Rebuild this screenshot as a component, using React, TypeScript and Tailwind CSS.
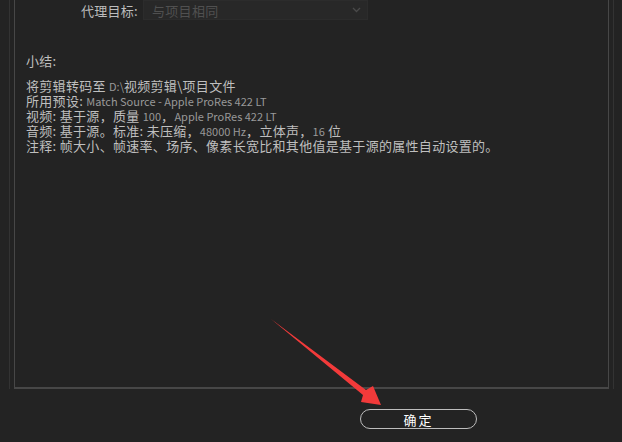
export default function App() {
  const lines = [
    [['将剪辑转码至 ', 'zh'], ['D:\\', 'en'], ['视频剪辑\\项目文件', 'zh']],
    [['所用预设: ', 'zh'], ['Match Source - Apple ProRes 422 LT', 'en']],
    [['视频: 基于源，质量 ', 'zh'], ['100', 'en'], ['，', 'zh'], ['Apple ProRes 422 LT', 'en']],
    [['音频: 基于源。标准: 未压缩，', 'zh'], ['48000 Hz', 'en'], ['，立体声，', 'zh'], ['16', 'en'], [' 位', 'zh']],
    [['注释: 帧大小、帧速率、场序、像素长宽比和其他值是基于源的属性自动设置的。', 'zh']],
  ]

  return (
    <div
      className="relative w-[622px] h-[442px] overflow-hidden bg-[#232323] text-[#bfbfbf]"
      style={{ fontFamily: '"Noto Sans CJK SC", "Noto Sans", sans-serif' }}
    >
      {/* Outer frame */}
      <div className="ml-[9px] w-[605px] h-[389px] border-x border-[#333] px-[4px]">
        {/* Inner panel */}
        <div className="h-full border-x border-b-2 border-[#474747]">
          {/* Proxy target row */}
          <div className="flex items-center h-[20px]">
            <span className="w-[123px] text-right text-[13px] leading-[15px] tracking-[0.3px] text-[#bdbdbd]">代理目标:</span>
            <div className="ml-[5px] w-[225px] h-[20px] flex items-center justify-between bg-[#282828] border border-[#2c2c2c] px-[8px]">
              <span className="text-[13px] leading-[15px] text-[#505050] tracking-[0.3px]">与项目相同</span>
              <svg width="9" height="6" viewBox="0 0 9 6" className="mr-[-2px]">
                <path d="M1 1 L4.5 4.5 L8 1" stroke="#4a4a4a" strokeWidth="1.3" fill="none" />
              </svg>
            </div>
          </div>

          {/* Summary */}
          <div className="pl-[11px] pt-[31px] text-[13px] tracking-[0.3px]">
            <div className="leading-[20px]">小结:</div>
            <div className="mt-[7px] leading-[15px]">
              {lines.map((ln, i) => (
                <div key={i} className="whitespace-nowrap h-[15px]">
                  {ln.map(([t, k], j) => (
                    <span
                      key={j}
                      className={
                        k === 'en'
                          ? 'text-[11px] leading-[15px] text-[#999] tracking-normal'
                          : 'leading-[15px]'
                      }
                    >
                      {t}
                    </span>
                  ))}
                </div>
              ))}
            </div>
          </div>
        </div>
      </div>

      {/* Footer */}
      <div className="flex pl-[360px] pt-[20px]">
        <button className="w-[117px] h-[20px] rounded-full border border-[#bdbdbd] text-[13px] text-white tracking-[2px] leading-none flex items-center justify-center">
          确定
        </button>
      </div>

      {/* Red annotation arrow */}
      <svg className="absolute left-0 top-0 pointer-events-none" width="622" height="442">
        <polygon
          points="271,319 366,390 373,386 381,405 361,402 363,395"
          fill="#f23a3a"
        />
      </svg>
    </div>
  )
}
